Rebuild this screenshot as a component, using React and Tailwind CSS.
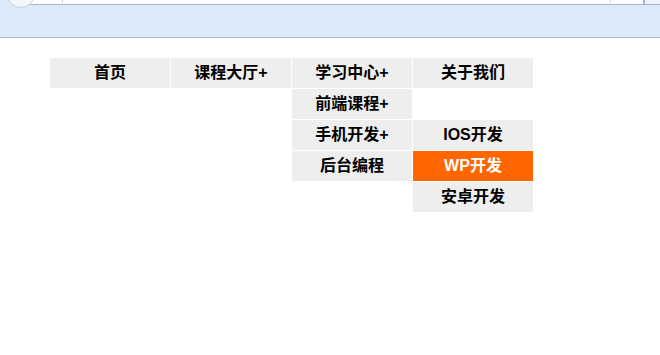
import React from "react";

const font = { fontFamily: '"Liberation Sans", "Noto Sans CJK SC", sans-serif' };

const menu = [
  { label: "首页" },
  { label: "课程大厅+" },
  {
    label: "学习中心+",
    children: [
      { label: "前端课程+" },
      {
        label: "手机开发+",
        children: [
          { label: "IOS开发" },
          { label: "WP开发", active: true },
          { label: "安卓开发" },
        ],
      },
      { label: "后台编程" },
    ],
  },
  { label: "关于我们" },
];

function Item({ item, sub }) {
  return (
    <li className="relative">
      <a
        className={`block w-[120px] h-[30px] leading-[30px] text-center text-[16px] font-bold ${
          item.active ? "bg-[#ff6600] text-white" : "bg-[#eeeeee] text-black"
        }`}
      >
        {item.label}
      </a>
      {item.children && (
        <ul
          className={`absolute flex flex-col gap-px ${
            sub ? "left-[121px] top-0" : "left-0 top-[31px]"
          }`}
        >
          {item.children.map((c) => (
            <Item key={c.label} item={c} sub />
          ))}
        </ul>
      )}
    </li>
  );
}

export default function App() {
  return (
    <div className="w-[660px] h-[355px] bg-white overflow-hidden" style={font}>
      {/* browser chrome */}
      <div className="h-[38px] bg-[#dce9f8] border-b border-[#a9bbd0] flex items-start overflow-hidden">
        <div className="ml-[7px] -mt-[20px] w-[28px] h-[28px] shrink-0 rounded-full bg-[#f3f7fc] border border-[#c4d3e3] z-10" />
        <div className="-ml-[15px] flex-1 h-[5px] bg-white border-b border-r border-[#a3b6cb] flex justify-between pl-[42px] pr-[32px]">
          <span className="w-px h-[3px] bg-[#c9d4df]" />
          <span className="w-px h-[3px] bg-[#c9d4df]" />
        </div>
        <div className="w-[16px] h-[5px] bg-[#eef4fb] border-b border-l border-[#a3b6cb]" />
      </div>

      <ul className="flex gap-px ml-[50px] mt-[20px]">
        {menu.map((m) => (
          <Item key={m.label} item={m} />
        ))}
      </ul>
    </div>
  );
}
